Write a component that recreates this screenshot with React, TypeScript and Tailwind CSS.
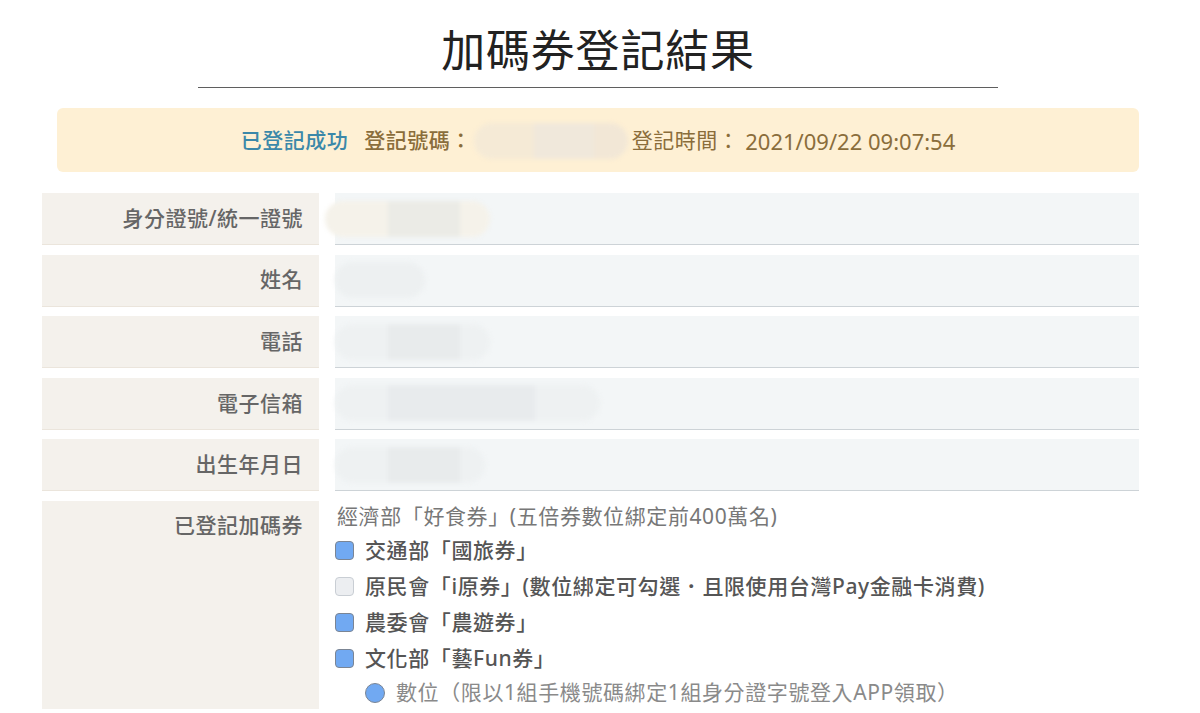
const font = "font-['Noto_Sans','Noto_Sans_CJK_TC',sans-serif]";

type Blob = { lead: number; mid: number; tail: number; shift?: number; edge: string; core: string };

const rows: { label: string; blob: Blob }[] = [
  { label: "身分證號/統一證號", blob: { lead: 63, mid: 72, tail: 30, shift: -10, edge: "bg-[#f5f2ea]", core: "bg-[#ebebe6]" } },
  { label: "姓名", blob: { lead: 53, mid: 0, tail: 37, edge: "bg-[#edf0f1]", core: "bg-[#edf0f1]" } },
  { label: "電話", blob: { lead: 53, mid: 72, tail: 30, edge: "bg-[#eef1f2]", core: "bg-[#e8ebec]" } },
  { label: "電子信箱", blob: { lead: 53, mid: 147, tail: 65, edge: "bg-[#eef1f2]", core: "bg-[#e8ebed]" } },
  { label: "出生年月日", blob: { lead: 53, mid: 72, tail: 25, edge: "bg-[#eef1f2]", core: "bg-[#e8ebec]" } },
];

const coupons = [
  { text: "交通部「國旅券」", checked: true },
  { text: "原民會「i原券」(數位綁定可勾選．且限使用台灣Pay金融卡消費)", checked: false },
  { text: "農委會「農遊券」", checked: true },
  { text: "文化部「藝Fun券」", checked: true },
];

function Redacted({ b }: { b: Blob }) {
  return (
    <div className="flex h-[36px] blur-[2px]" style={{ marginLeft: b.shift ?? 0 }}>
      <div className={`rounded-l-full ${b.edge}`} style={{ width: b.lead }} />
      <div className={b.core} style={{ width: b.mid }} />
      <div className={`rounded-r-full ${b.edge}`} style={{ width: b.tail }} />
    </div>
  );
}

function Check({ on }: { on: boolean }) {
  return (
    <span
      className={`mr-[11px] inline-block h-[19px] w-[19px] shrink-0 rounded-[4px] border ${
        on ? "border-[#7b8594] bg-[#71a9f2]" : "border-[#c9ced4] bg-[#eceef1]"
      }`}
    />
  );
}

export default function App() {
  return (
    <div className={`min-h-[713px] bg-white pl-[42px] pr-[61px] ${font}`}>
      <div className="ml-[156px] w-[800px] border-b border-[#5f5f5f] pb-[4px] pt-[17px] text-center">
        <h1 className="text-[44px] font-normal leading-[66px] tracking-[0.8px] text-[#222]">加碼券登記結果</h1>
      </div>

      <div className="ml-[15px] mt-[20px] flex h-[64px] items-center justify-center rounded-[6px] bg-[#fef0d4] pt-[2px] text-[21px] tracking-[0.5px] text-[#8a6d3b]">
        <span className="font-medium text-[#3b88a9]">已登記成功</span>
        <span className="ml-[16px] font-medium">登記號碼：</span>
        <div className="ml-[2px] flex h-[36px] blur-[2px]">
          <div className="w-[60px] rounded-l-full bg-[#f5ead6]" />
          <div className="w-[60px] bg-[#f0e8db]" />
          <div className="w-[34px] rounded-r-full bg-[#f2e7d6]" />
        </div>
        <span className="ml-[4px]">登記時間：</span>
        <span className="ml-[6px] text-[22px] tracking-normal">2021/09/22 09:07:54</span>
      </div>

      <div className="mt-[21px] flex flex-col gap-[9.6px]">
        {rows.map((r) => (
          <div key={r.label} className="flex h-[52px] gap-[16px]">
            <div className="flex w-[277px] shrink-0 items-center justify-end border-b border-[#ebe5dc] bg-[#f4f1ec] pr-[16px] text-[21px] font-medium tracking-[0.5px] text-[#666]">
              {r.label}
            </div>
            <div className="flex flex-1 items-center border-b border-[#cdd3d7] bg-[#f3f6f7]">
              <Redacted b={r.blob} />
            </div>
          </div>
        ))}

        <div className="flex gap-[16px]">
          <div className="w-[277px] shrink-0 bg-[#f4f1ec] pr-[16px] pt-[9px] text-right text-[21px] font-medium leading-[30px] tracking-[0.5px] text-[#666]">
            已登記加碼券
          </div>
          <div className="flex-1 text-[21px] tracking-[0.6px]">
            <div className="flex h-[32px] items-center pl-[2px] text-[#777]">經濟部「好食券」(五倍券數位綁定前400萬名)</div>
            {coupons.map((c) => (
              <div key={c.text} className="flex h-[36px] items-center font-medium text-[#555]">
                <Check on={c.checked} />
                {c.text}
              </div>
            ))}
            <div className="flex h-[32px] items-center pl-[30px] text-[#8a8a8a]">
              <span className="mr-[11px] inline-block h-[20px] w-[20px] shrink-0 rounded-full border border-[#7b8594] bg-[#71a9f2]" />
              數位（限以1組手機號碼綁定1組身分證字號登入APP領取）
            </div>
          </div>
        </div>
      </div>
    </div>
  );
}
